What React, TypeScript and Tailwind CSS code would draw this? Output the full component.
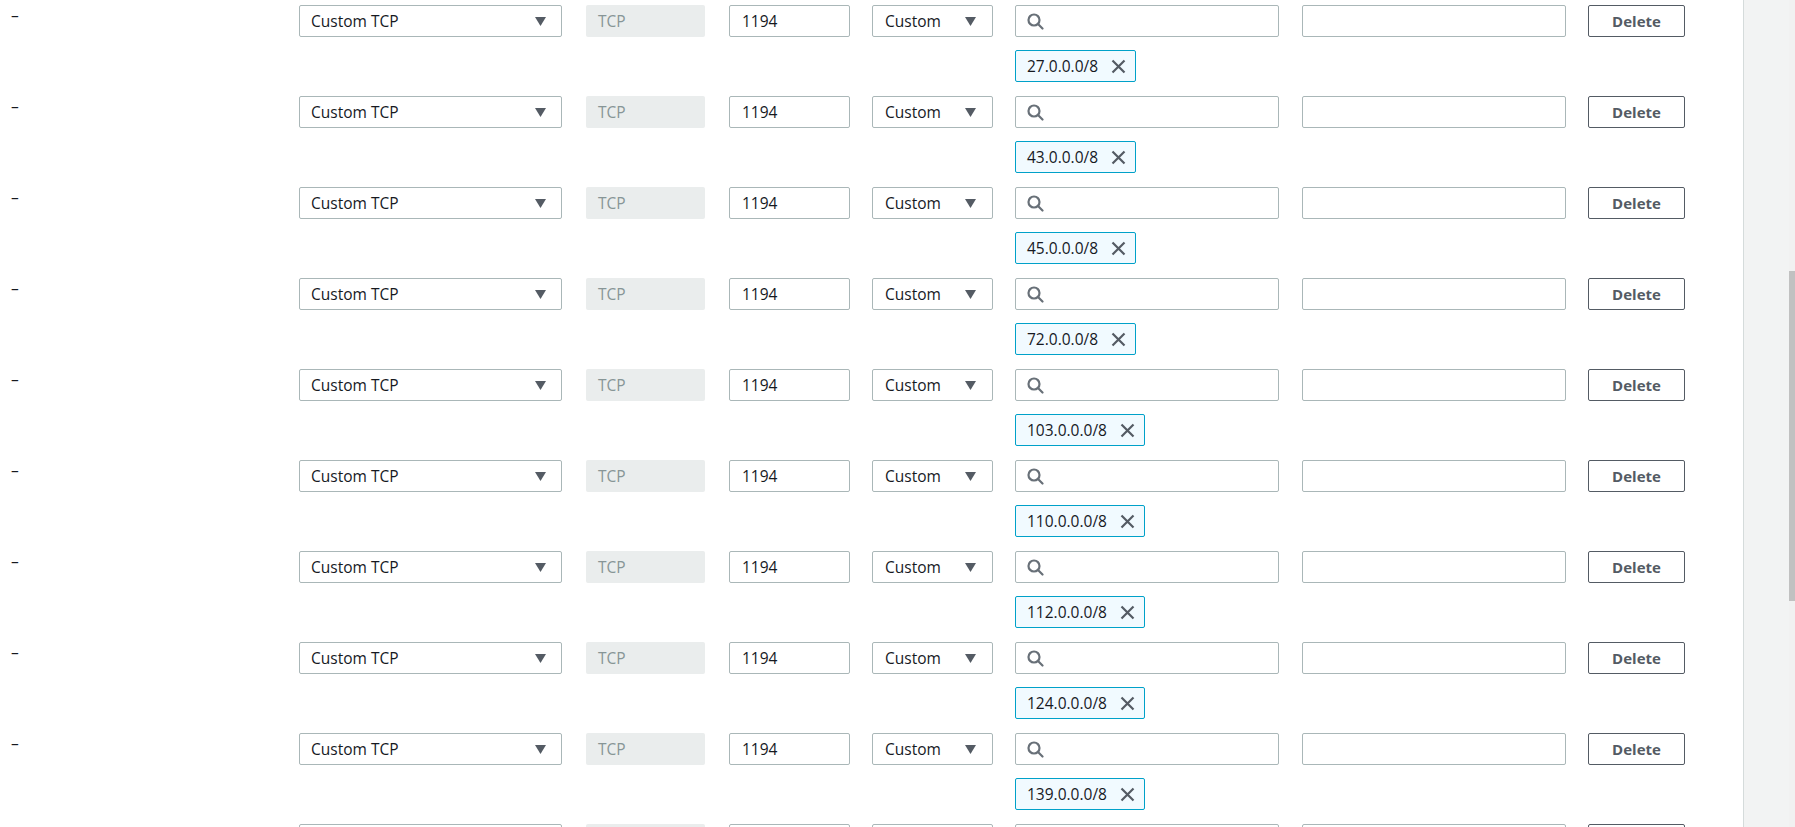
import React from 'react'

const CIDRS = ['27.0.0.0/8', '43.0.0.0/8', '45.0.0.0/8', '72.0.0.0/8', '103.0.0.0/8', '110.0.0.0/8', '112.0.0.0/8', '124.0.0.0/8', '139.0.0.0/8', '150.0.0.0/8']

function Caret() {
  return (
    <svg width="11" height="9" viewBox="0 0 11 9" className="shrink-0">
      <path d="M0 0h11L5.5 9z" fill="#545b64" />
    </svg>
  )
}

function SearchIcon() {
  return (
    <svg width="17" height="17" viewBox="0 0 17 17" fill="none" stroke="#687078" strokeWidth="2.2" strokeLinecap="round">
      <circle cx="7" cy="7" r="5.5" />
      <path d="M11 11l4.5 4.5" />
    </svg>
  )
}

function CloseIcon() {
  return (
    <svg width="15" height="15" viewBox="0 0 15 15" fill="none" stroke="#545b64" strokeWidth="2.2">
      <path d="M1.5 1.5l12 12M13.5 1.5l-12 12" />
    </svg>
  )
}

function RuleRow({ cidr }: { cidr: string }) {
  return (
    <div className="mb-[14px]">
      <div className="flex h-[32px] items-stretch">
        <div className="w-[299px] shrink-0 pl-[11px] leading-[20px]">–</div>
        <div className="flex w-[263px] shrink-0 items-center justify-between rounded-[2px] border border-[#aab7b8] bg-white pl-[11px] pr-[15px] pt-[1px]">
          <span>Custom TCP</span>
          <Caret />
        </div>
        <div className="ml-[24px] flex w-[119px] shrink-0 items-center rounded-[2px] bg-[#eaeded] pl-[12px] pt-[1px] text-[#879596]">TCP</div>
        <div className="ml-[24px] flex w-[121px] shrink-0 items-center rounded-[2px] border border-[#aab7b8] bg-white pl-[12px] pt-[1px]">1194</div>
        <div className="ml-[22px] flex w-[121px] shrink-0 items-center justify-between rounded-[2px] border border-[#aab7b8] bg-white pl-[12px] pr-[16px] pt-[1px]">
          <span>Custom</span>
          <Caret />
        </div>
        <div className="ml-[22px] flex w-[264px] shrink-0 items-center rounded-[2px] border border-[#aab7b8] bg-white pl-[11px]">
          <SearchIcon />
        </div>
        <div className="ml-[23px] w-[264px] shrink-0 rounded-[2px] border border-[#aab7b8] bg-white" />
        <button className="ml-[22px] flex w-[97px] shrink-0 items-center justify-center rounded-[2px] border border-[#545b64] bg-white pt-[1px] text-[15px] font-bold text-[#545b64]">
          Delete
        </button>
      </div>
      <div className="mt-[13px] flex pl-[1015px]">
        <div className="flex h-[32px] items-center gap-[13px] rounded-[2px] border border-[#00a1c9] bg-[#f1faff] pl-[11px] pr-[9px] pt-[1px]">
          <span>{cidr}</span>
          <CloseIcon />
        </div>
      </div>
    </div>
  )
}

export default function App() {
  return (
    <div className="flex h-[827px] w-[1795px] overflow-hidden bg-white font-['Open_Sans',sans-serif] text-[15.5px] text-[#16191f]">
      <div className="w-[1743px] shrink-0 pt-[5px]">
        {CIDRS.map((c) => (
          <RuleRow key={c} cidr={c} />
        ))}
      </div>
      <div className="w-[46px] shrink-0 border-l border-[#d5dbdb] bg-[#f2f3f3]" />
      <div className="relative w-[6px] shrink-0 bg-[#f1f1f1]">
        <div className="absolute left-0 top-[271px] h-[330px] w-[6px] bg-[#c1c1c1]" />
      </div>
    </div>
  )
}
